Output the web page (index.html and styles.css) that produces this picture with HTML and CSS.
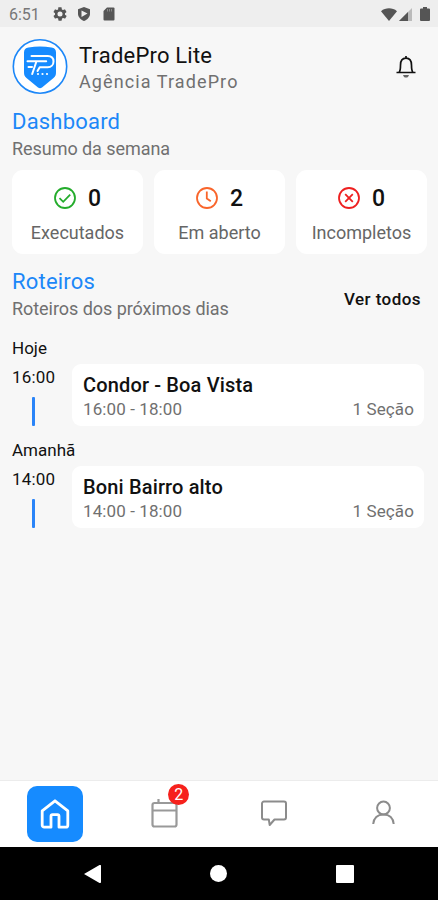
FILE: index.html
```html
<!DOCTYPE html>
<html lang="pt-BR">
<head>
    <meta charset="UTF-8">
    <meta name="viewport" content="width=device-width, initial-scale=1.0">
    <title>TradePro Lite</title>
    <link rel="stylesheet" href="styles.css">
</head>
<body>
    <div class="status-bar">
        <span class="clock">6:51</span>
        <svg class="status-gear" width="16" height="16" viewBox="0 0 24 24"><path fill="#555" fill-rule="evenodd" d="M19.4 13c.1-.3.1-.7.1-1s0-.7-.1-1l2.1-1.6c.2-.2.2-.4.1-.6l-2-3.5c-.1-.2-.4-.3-.6-.2l-2.5 1c-.5-.4-1.1-.7-1.7-1l-.4-2.6c0-.3-.2-.5-.5-.5h-4c-.2 0-.5.2-.5.5L9.2 5.1c-.6.3-1.2.6-1.7 1l-2.5-1c-.2-.1-.5 0-.6.2l-2 3.5c-.1.2-.1.5.1.6L4.6 11c-.1.3-.1.7-.1 1s0 .7.1 1l-2.1 1.600c-.2.2-.2.4-.1.6l2 3.5c.1.2.4.3.6.2l2.5-1c.5.4 1.1.7 1.7 1l.4 2.6c0 .3.2.5.5.5h4c.2 0 .5-.2.5-.5l.4-2.6c.6-.3 1.2-.6 1.7-1l2.5 1c.2.1.5 0 .6-.2l2-3.5c.1-.2.1-.5-.1-.6zM12 15.8a3.8 3.8 0 1 1 0-7.6 3.8 3.8 0 0 1 0 7.6z"/></svg>
        <svg class="status-shield" width="14" height="16" viewBox="0 0 14 16"><path fill="#555" d="M7 1l6 2.2v4.6c0 3.2-2.5 6-6 7.2-3.5-1.2-6-4-6-7.2V3.2z"/><path fill="#eee" d="M4.5 4.5l6 3-6 3.5z"/></svg>
        <svg class="status-sd" width="12" height="14" viewBox="0 0 12 14"><path fill="#555" d="M4 .5h6.5a1 1 0 0 1 1 1v11a1 1 0 0 1-1 1h-9a1 1 0 0 1-1-1V4z"/><path stroke="#888" d="M4.5 2v2.5M6.5 2v2.5M8.5 2v2.5"/></svg>
        <div class="signals">
            <svg width="16" height="13" viewBox="0 0 16 13"><path fill="#555" d="M8 13L0 3.2C4.5-.6 11.5-.6 16 3.2z"/></svg>
            <svg width="13" height="13" viewBox="0 0 13 13"><path fill="#bbb" d="M13 0v13H0z"/><path fill="#555" d="M9 4v9H0z"/></svg>
            <svg class="battery" width="10" height="14" viewBox="0 0 10 14"><path fill="#555" d="M3 0h4v1.5h2a1 1 0 0 1 1 1V13a1 1 0 0 1-1 1H1a1 1 0 0 1-1-1V2.5a1 1 0 0 1 1-1h2z"/></svg>
        </div>
    </div>

    <main>
        <header class="header">
            <svg class="logo" width="56" height="56" viewBox="0 0 56 56" fill="none">
                <circle cx="28" cy="27.5" r="26.700" fill="#fff" stroke="#1c87f8" stroke-width="1.6"/>
                <path fill="#168bff" d="M12 13.5c0-3 1.5-4.5 4.500-5 7.500-1.300 15.500-1.300 23 0 3 .5 4.500 2 4.500 5V33c0 3-.5 4.500-2.500 6L30 48.500c-1.500 1-2.500 1-4 0L14.500 39c-2-1.500-2.500-3-2.500-6z"/>
                <path stroke="#fff" stroke-width="2" stroke-linejoin="round" stroke-linecap="round" d="M19.500 17h16.300c3.700 0 5.700 2.200 5.700 5.500s-2.300 5.700-5.800 5.700h-8L25.500 32M15.500 22.200h18.700M24.500 22.200l-4.300 12.800M16.500 28h3.500"/>
                <circle cx="26" cy="35" r="1.100" fill="#fff"/><circle cx="30.500" cy="35" r="1.100" fill="#fff"/><circle cx="35" cy="35" r="1.100" fill="#fff"/>
            </svg>
            <div class="brand">
                <h1>TradePro Lite</h1>
                <p>Agência TradePro</p>
            </div>
            <svg class="bell" width="22" height="24" viewBox="0 0 22 24" fill="none" stroke="#111" stroke-width="1.7"><path d="M11 1v2M1.5 17.5h19M4 17.5c1.300-1.600 1.500-3 1.500-7.300C5.500 6 7.500 3.200 11 3.200s5.500 2.800 5.500 7c0 4.300.2 5.700 1.500 7.300"/><path stroke="none" fill="#666" d="M8 20h6c-.4 1.700-1.400 2.600-3 2.600S8.400 21.700 8 20z"/></svg>
        </header>

        <section class="dashboard">
            <h2>Dashboard</h2>
            <p class="subtitle">Resumo da semana</p>
            <div class="cards">
                <div class="card">
                    <div class="card-value">
                        <svg width="22" height="22" viewBox="0 0 22 22" fill="none" stroke="#24ac2c" stroke-width="1.8"><circle cx="11" cy="11" r="10"/><path d="M5.5 11.2l3.700 3.600 7-7.200"/></svg>
                        <span>0</span>
                    </div>
                    <div class="card-label">Executados</div>
                </div>
                <div class="card">
                    <div class="card-value">
                        <svg width="22" height="22" viewBox="0 0 22 22" fill="none" stroke="#f9652b" stroke-width="1.8"><circle cx="11" cy="11" r="10"/><path d="M10.8 4.5v7l4 2.800"/></svg>
                        <span>2</span>
                    </div>
                    <div class="card-label">Em aberto</div>
                </div>
                <div class="card">
                    <div class="card-value">
                        <svg width="22" height="22" viewBox="0 0 22 22" fill="none" stroke="#ee2020" stroke-width="1.8"><circle cx="11" cy="11" r="10"/><path d="M7.2 7.200l7.600 7.600M14.800 7.200l-7.600 7.600"/></svg>
                        <span>0</span>
                    </div>
                    <div class="card-label">Incompletos</div>
                </div>
            </div>
        </section>

        <section class="routes">
            <div class="routes-header">
                <div>
                    <h2>Roteiros</h2>
                    <p class="subtitle">Roteiros dos próximos dias</p>
                </div>
                <a class="see-all">Ver todos</a>
            </div>

            <div class="day">
                <h3>Hoje</h3>
                <div class="route">
                    <div class="time">16:00</div>
                    <div class="route-card">
                        <div class="route-name">Condor - Boa Vista</div>
                        <div class="route-info"><span>16:00 - 18:00</span><span>1 Seção</span></div>
                    </div>
                </div>
            </div>
            <div class="day">
                <h3>Amanhã</h3>
                <div class="route">
                    <div class="time">14:00</div>
                    <div class="route-card">
                        <div class="route-name">Boni Bairro alto</div>
                        <div class="route-info"><span>14:00 - 18:00</span><span>1 Seção</span></div>
                    </div>
                </div>
            </div>
        </section>
    </main>

    <nav class="tabs">
        <div class="tab">
            <div class="tab-active">
                <svg width="30" height="30" viewBox="0 0 30 30" fill="none" stroke="#fff" stroke-width="2.8" stroke-linejoin="round"><path d="M2.200 11.800L15 1.800l12.800 10v14.400a2 2 0 0 1-2 2H19v-11a1.500 1.500 0 0 0-1.500-1.500h-5a1.500 1.500 0 0 0-1.500 1.500v11H4.200a2 2 0 0 1-2-2z"/></svg>
            </div>
        </div>
        <div class="tab">
            <div class="tab-icon">
                <svg width="28" height="30" viewBox="0 0 28 30" fill="none" stroke="#999" stroke-width="2.2"><rect x="2.500" y="4" width="24" height="23.500" rx="2"/><path d="M2.500 11.500h24M8.500 0v4"/></svg>
                <span class="badge">2</span>
            </div>
        </div>
        <div class="tab">
            <svg width="28" height="28" viewBox="0 0 28 28" fill="none" stroke="#8c8c8c" stroke-width="2" stroke-linejoin="round"><path d="M4 1.500h20a2 2 0 0 1 2 2v14a2 2 0 0 1-2 2h-9.500L9.700 25l-.9-5.500H4a2 2 0 0 1-2-2v-14a2 2 0 0 1 2-2z"/></svg>
        </div>
        <div class="tab">
            <svg width="24" height="28" viewBox="0 0 24 28" fill="none" stroke="#8c8c8c" stroke-width="2"><circle cx="12.500" cy="8" r="6.400"/><path d="M2.200 24C2.700 18.200 6.500 14.400 12.500 14.400s9.800 3.800 10.200 9.600"/></svg>
        </div>
    </nav>

    <div class="system-nav">
        <svg width="17" height="18" viewBox="0 0 17 18"><path fill="#fff" d="M0 9L15.500 0a1 1 0 0 1 1.500 1v16a1 1 0 0 1-1.500 1z"/></svg>
        <span class="home"></span>
        <span class="recents"></span>
    </div>
</body>
</html>
```

FILE: styles.css
```css
* {
    box-sizing: border-box;
}

body {
    margin: 0;
    height: 900px;
    display: flex;
    flex-direction: column;
    font-family: Roboto, 'Liberation Sans', sans-serif;
    background-color: #f7f7f7;
    color: #111;
    overflow: hidden;
}

h1, h2, h3, p {
    margin: 0;
    font-weight: 400;
}

svg {
    display: block;
    flex: none;
}

.status-bar {
    height: 27px;
    display: flex;
    align-items: center;
    padding: 1px 8px 0 9px;
    background-color: #eee;
}

.clock {
    width: 43px;
    font-size: 16px;
    color: #777;
}

.status-shield {
    margin-left: 9px;
}

.status-sd {
    margin-left: 12px;
}

.signals {
    display: flex;
    align-items: center;
    gap: 2px;
    margin-left: auto;
}

.battery {
    margin-left: 6px;
}

main {
    flex: 1;
    padding: 12px 11px 0 12px;
}

.header {
    display: flex;
    align-items: flex-start;
    height: 69px;
}

.brand {
    margin: 3px auto 0 11px;
}

.brand h1 {
    font-size: 22px;
    line-height: 27px;
    letter-spacing: 0.2px;
}

.brand p {
    font-size: 18px;
    line-height: 26px;
    letter-spacing: 1.1px;
    color: #707070;
}

.bell {
    margin: 16px 10px 0 0;
}

h2 {
    font-size: 22px;
    line-height: 28px;
    color: #1c87f8;
    letter-spacing: 0.2px;
}

.subtitle {
    font-size: 18px;
    line-height: 25px;
    letter-spacing: -0.05px;
    color: #707070;
}

.cards {
    display: grid;
    grid-template-columns: repeat(3, 1fr);
    gap: 11px;
    margin-top: 9px;
}

.card {
    height: 84px;
    padding-top: 14px;
    border-radius: 11px;
    background-color: #fff;
}

.card-value {
    display: flex;
    align-items: center;
    justify-content: center;
    gap: 12px;
    height: 28px;
    font-size: 23px;
    font-weight: 500;
}

.card-label {
    margin-top: 8px;
    font-size: 18px;
    line-height: 26px;
    text-align: center;
    color: #666;
}

.routes {
    margin-top: 14px;
}

.routes-header {
    display: flex;
    align-items: center;
    justify-content: space-between;
    margin-bottom: 15px;
}

.see-all {
    margin: 8px 6px 0 0;
    font-size: 17px;
    line-height: 24px;
    font-weight: 500;
    letter-spacing: 0.45px;
}

.day {
    margin-bottom: 11.5px;
}

.day h3 {
    font-size: 17px;
    line-height: 24px;
}

.route {
    display: flex;
    margin: 4px 3px 0 0;
}

.time {
    width: 60px;
    font-size: 17px;
    line-height: 26px;
    letter-spacing: 0.15px;
}

.time::after {
    content: '';
    display: block;
    width: 3px;
    height: 29px;
    margin: 7px 0 0 20px;
    border-radius: 1px;
    background-color: #2a84f8;
}

.route-card {
    flex: 1;
    height: 62px;
    padding: 8px 10px 0 11px;
    border-radius: 9px;
    background-color: #fff;
}

.route-name {
    font-size: 20px;
    line-height: 26px;
    font-weight: 500;
    letter-spacing: 0.15px;
}

.route-info {
    display: flex;
    justify-content: space-between;
    font-size: 17px;
    line-height: 23px;
    letter-spacing: 0.1px;
    color: #707070;
}

.tabs {
    height: 67px;
    display: grid;
    grid-template-columns: repeat(4, 1fr);
    align-items: center;
    justify-items: center;
    background-color: #fff;
    border-top: 1px solid #ececec;
}

.tab-active {
    width: 56px;
    height: 56px;
    display: flex;
    align-items: center;
    justify-content: center;
    border-radius: 10px;
    background-color: #168bff;
}

.tab-icon {
    position: relative;
}

.badge {
    position: absolute;
    top: -15px;
    right: -11px;
    width: 21px;
    height: 21px;
    border-radius: 50%;
    background-color: #f6211c;
    color: #fff;
    font-size: 16px;
    line-height: 21px;
    text-align: center;
}

.system-nav {
    height: 53px;
    display: flex;
    align-items: center;
    justify-content: space-between;
    padding: 0 84px;
    background-color: #000;
}

.home {
    width: 17px;
    height: 17px;
    border-radius: 50%;
    background-color: #fff;
}

.recents {
    width: 18px;
    height: 18px;
    border-radius: 1px;
    background-color: #fff;
}
```
